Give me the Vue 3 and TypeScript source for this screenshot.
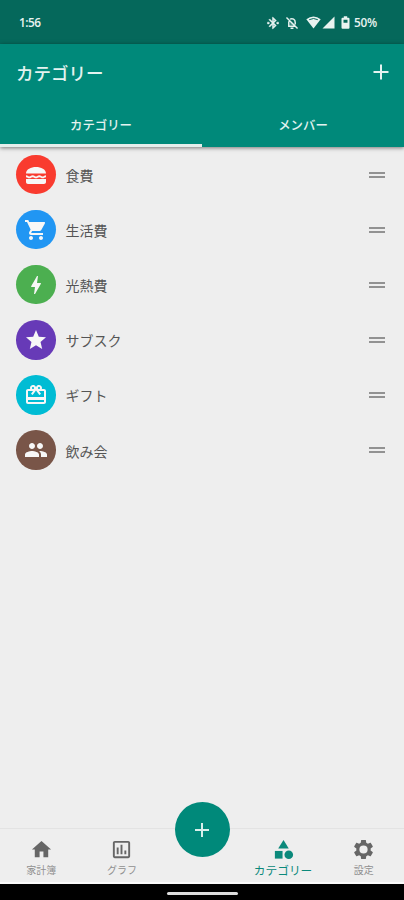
<script setup lang="ts">
interface Category {
  name: string
  color: string
  path: string
}

const categories: Category[] = [
  {
    name: '食費',
    color: '#f93b2f',
    path: 'M2 16h20v3c0 1.100-.9 2-2 2H4c-1.100 0-2-.9-2-2v-3zM12 4C7 4 2 6.200 2 10.600h20C22 6.200 17 4 12 4zM2 12.200c1.700 0 1.700 1.200 3.300 1.200s1.700-1.200 3.400-1.200 1.700 1.200 3.300 1.200 1.700-1.200 3.300-1.200 1.700 1.200 3.400 1.200 1.600-1.200 3.300-1.200v2c-1.700 0-1.700 1.100-3.300 1.100s-1.700-1.100-3.400-1.100-1.600 1.100-3.300 1.100-1.700-1.100-3.300-1.100-1.700 1.100-3.400 1.100S3.700 14.200 2 14.200z',
  },
  {
    name: '生活費',
    color: '#2196f3',
    path: 'M7 18c-1.100 0-1.990.9-1.990 2S5.900 22 7 22s2-.9 2-2-.9-2-2-2zM1 2v2h2l3.600 7.590-1.350 2.450c-.16.280-.25.610-.25.960 0 1.100.9 2 2 2h12v-2H7.420c-.14 0-.25-.11-.25-.25l.03-.12.900-1.630h7.450c.75 0 1.410-.41 1.750-1.030l3.580-6.490A1.003 1.003 0 0020 4H5.210l-.94-2H1zm16 16c-1.100 0-1.990.9-1.990 2s.89 2 1.990 2 2-.9 2-2-.9-2-2-2z',
  },
  {
    name: '光熱費',
    color: '#4caf50',
    path: 'M11 21h-1l1-7H7.500c-.58 0-.57-.32-.38-.66.190-.34.050-.08.070-.12C8.480 10.940 10.420 7.540 13 3h1l-1 7h3.500c.49 0 .56.330.470.510l-.07.150C12.960 17.550 11 21 11 21z',
  },
  {
    name: 'サブスク',
    color: '#673ab7',
    path: 'M12 17.270L18.180 21l-1.640-7.030L22 9.240l-7.190-.61L12 2 9.190 8.630 2 9.240l5.460 4.730L5.820 21z',
  },
  {
    name: 'ギフト',
    color: '#00bcd4',
    path: 'M20 6h-2.180c.11-.31.180-.65.180-1 0-1.660-1.340-3-3-3-1.050 0-1.960.54-2.500 1.350l-.5.670-.5-.68C10.960 2.540 10.050 2 9 2 7.340 2 6 3.340 6 5c0 .35.070.69.180 1H4c-1.110 0-1.990.89-1.990 2L2 19c0 1.110.89 2 2 2h16c1.110 0 2-.89 2-2V8c0-1.110-.89-2-2-2zm-5-2c.55 0 1 .45 1 1s-.45 1-1 1-1-.45-1-1 .45-1 1-1zM9 4c.55 0 1 .45 1 1s-.45 1-1 1-1-.45-1-1 .45-1 1-1zm11 15H4v-2h16v2zm0-5H4V8h5.080L7 10.830 8.620 12 12 7.400l3.380 4.600L17 10.830 14.920 8H20v6z',
  },
  {
    name: '飲み会',
    color: '#795548',
    path: 'M16 11c1.660 0 2.990-1.340 2.990-3S17.660 5 16 5s-3 1.340-3 3 1.340 3 3 3zm-8 0c1.660 0 2.990-1.340 2.990-3S9.660 5 8 5 5 6.340 5 8s1.340 3 3 3zm0 2c-2.330 0-7 1.170-7 3.500V19h14v-2.500c0-2.330-4.670-3.500-7-3.500zm8 0c-.29 0-.62.020-.97.050 1.160.84 1.970 1.970 1.970 3.450V19h6v-2.500c0-2.330-4.670-3.500-7-3.500z',
  },
]
</script>

<template>
  <div class="screen">
    <div class="status">
      <span class="clock">1:56</span>
      <div class="indicators">
        <svg class="bluetooth" viewBox="0 0 24 24"><path d="M17.710 7.710L12 2h-1v7.590L6.410 5 5 6.410 10.590 12 5 17.590 6.410 19 11 14.410V22h1l5.710-5.710-4.300-4.290 4.300-4.290zM13 5.830l1.880 1.880L13 9.590V5.830zm1.880 10.460L13 18.170v-3.760l1.880 1.880zM2.500 10.500h3v3h-3zM18.500 10.500h3v3h-3z" stroke="currentColor" stroke-width=".8" /></svg>
        <svg class="muted" viewBox="0 0 24 24"><path d="M2.500 2.500l19 19M8.500 5.500c4.500-2.500 9 .5 9 5v4M6.500 9v8.500h12M9.500 21h5" fill="none" stroke="currentColor" stroke-width="2.500" /><path d="M9 9l7 7H9z" opacity=".35" /></svg>
        <svg class="wifi" viewBox="0 0 15 13"><path d="M.3 3.200Q7.500-2.200 14.700 3.200L7.500 12.500z" /><path d="M3.200 3.700Q7.500 1.300 11.800 3.700" fill="none" stroke="#05685b" stroke-width="1" /></svg>
        <svg class="signal" viewBox="0 0 13 13"><path d="M12.500.5v12H.5z" /></svg>
        <svg class="battery" viewBox="0 0 9 13"><path d="M2.800.3h3.400v1.400h1.300q1 0 1 1v9q0 1-1 1h-6q-1 0-1-1v-9q0-1 1-1h1.300zM2.500 3.700v3.100h4V3.700z" fill-rule="evenodd" /></svg>
        <span class="level">50%</span>
      </div>
    </div>

    <header class="header">
      <div class="toolbar">
        <h1>カテゴリー</h1>
        <svg class="add" viewBox="0 0 16 16"><path d="M8 .5v15M.5 8h15" /></svg>
      </div>
      <div class="tabs">
        <div class="tab active">カテゴリー</div>
        <div class="tab">メンバー</div>
      </div>
    </header>

    <main class="list">
      <div v-for="item in categories" :key="item.name" class="row">
        <span class="avatar" :style="{ background: item.color }">
          <svg viewBox="0 0 24 24"><path :d="item.path" fill-rule="evenodd" /></svg>
        </span>
        <span class="name">{{ item.name }}</span>
        <span class="handle"></span>
      </div>
    </main>

    <nav class="nav">
      <div class="item">
        <svg viewBox="0 0 24 24"><path d="M10 20v-6h4v6h5v-8h3L12 3 2 12h3v8z" /></svg>
        <span>家計簿</span>
      </div>
      <div class="item">
        <svg viewBox="0 0 24 24"><path d="M19 3H5c-1.100 0-2 .9-2 2v14c0 1.100.9 2 2 2h14c1.100 0 2-.9 2-2V5c0-1.100-.9-2-2-2zm0 16H5V5h14v14zM7 10h2v7H7zm4-3h2v10h-2zm4 6h2v4h-2z" /></svg>
        <span>グラフ</span>
      </div>
      <div class="center">
        <div class="fab"><svg viewBox="0 0 16 16"><path d="M8 1v14M1 8h14" /></svg></div>
      </div>
      <div class="item selected">
        <svg viewBox="0 0 24 24"><path d="M12 2l-5.500 9h11z" /><circle cx="17.500" cy="17.500" r="4.500" /><path d="M3 13.500h8v8H3z" /></svg>
        <span>カテゴリー</span>
      </div>
      <div class="item">
        <svg viewBox="0 0 24 24"><path fill-rule="evenodd" d="M19.430 12.980c.04-.32.070-.64.070-.98s-.03-.66-.07-.98l2.110-1.650c.19-.15.240-.42.120-.64l-2-3.460c-.12-.22-.39-.3-.61-.22l-2.490 1c-.52-.4-1.080-.73-1.690-.98l-.38-2.650C14.460 2.180 14.250 2 14 2h-4c-.25 0-.46.180-.49.420l-.38 2.650c-.61.250-1.170.59-1.690.98l-2.490-1c-.23-.09-.49 0-.61.220l-2 3.460c-.13.220-.07.490.120.640l2.110 1.650c-.04.320-.07.650-.07.980s.03.660.070.980l-2.110 1.650c-.19.150-.24.420-.12.640l2 3.460c.12.220.39.300.61.220l2.490-1c.52.400 1.080.73 1.690.98l.38 2.650c.03.240.24.420.49.420h4c.25 0 .46-.18.490-.42l.38-2.650c.61-.25 1.170-.59 1.690-.98l2.490 1c.23.090.49 0 .61-.22l2-3.460c.12-.22.070-.49-.12-.64l-2.110-1.650zM12 16.300a4.300 4.300 0 110-8.600 4.300 4.300 0 010 8.600z" /></svg>
        <span>設定</span>
      </div>
    </nav>
    <div class="system"><span></span></div>
  </div>
</template>

<style>
body {
  margin: 0;
}
</style>

<style scoped>
.screen {
  display: flex;
  flex-direction: column;
  width: 404px;
  height: 900px;
  overflow: hidden;
  background: #eee;
  font-family: 'Noto Sans CJK JP', sans-serif;
}
svg {
  display: block;
  fill: currentColor;
}
.status {
  flex: none;
  height: 44px;
  box-sizing: border-box;
  padding: 1px 26px 0 19px;
  display: flex;
  align-items: center;
  justify-content: space-between;
  background: #05685b;
  color: #e9f3f1;
  font: 600 11.8px/43px 'Open Sans', sans-serif;
}
.clock {
  letter-spacing: -0.5px;
}
.indicators {
  display: flex;
  align-items: center;
}
.bluetooth {
  width: 14px;
  height: 14px;
  margin-right: 5px;
}
.muted {
  width: 14px;
  height: 14px;
  margin-right: 7px;
}
.wifi {
  width: 15px;
  height: 13px;
}
.signal {
  width: 13px;
  height: 13px;
  margin: 0 6px 0 1px;
}
.battery {
  width: 9px;
  height: 13px;
  margin-right: 4px;
}
.level {
  width: 24px;
  letter-spacing: -0.3px;
}
.header {
  flex: none;
  height: 103px;
  display: flex;
  flex-direction: column;
  background: #00897a;
  color: #e4f3f0;
  box-shadow: 0 1px 4px rgba(0, 0, 0, 0.5);
}
.toolbar {
  height: 58px;
  padding: 0 15px 0 16px;
  display: flex;
  align-items: center;
  justify-content: space-between;
}
h1 {
  margin: 0;
  font-size: 17.5px;
  font-weight: 500;
  line-height: 58px;
}
.add {
  width: 16px;
  height: 16px;
  margin-bottom: 2px;
}
.add path,
.fab path {
  fill: none;
  stroke: currentColor;
  stroke-width: 2;
}
.tabs {
  flex: none;
  height: 45px;
  display: flex;
}
.tab {
  flex: 1;
  height: 45px;
  box-sizing: border-box;
  padding-top: 3px;
  border-bottom: 3px solid transparent;
  text-align: center;
  font-size: 12.4px;
  font-weight: 500;
  line-height: 41px;
}
.tab.active {
  border-color: #e5eeec;
}
.list {
  flex: 1;
}
.row {
  height: 55.100px;
  padding: 0 19px 0 16px;
  display: flex;
  align-items: center;
}
.avatar {
  width: 39.500px;
  height: 39.500px;
  border-radius: 50%;
  display: flex;
  align-items: center;
  justify-content: center;
  color: #f7f7f7;
}
.avatar svg {
  width: 24px;
  height: 24px;
}
.name {
  flex: 1;
  margin: 1px 0 0 10px;
  font-size: 14px;
  color: #555;
}
.handle {
  width: 16px;
  height: 2px;
  border-top: 2px solid #929292;
  border-bottom: 2px solid #929292;
}
.nav {
  flex: none;
  height: 56px;
  box-sizing: border-box;
  border-top: 1px solid #e3e3e3;
  border-bottom: 2px solid #fafafa;
  display: grid;
  grid-template-columns: repeat(5, 1fr);
  padding-left: 1px;
  color: #666;
}
.item {
  display: flex;
  flex-direction: column;
  align-items: center;
  padding-top: 9px;
}
.item svg {
  width: 23px;
  height: 23px;
}
.item span {
  height: 18px;
  font-size: 10px;
  line-height: 18px;
  color: #909090;
}
.item.selected {
  color: #0b897b;
}
.item.selected span {
  font-size: 11.7px;
  line-height: 17px;
  color: #0b897b;
}
.center {
  display: flex;
  justify-content: center;
}
.fab {
  width: 55px;
  height: 55px;
  margin-top: -27px;
  border-radius: 50%;
  display: flex;
  align-items: center;
  justify-content: center;
  background: #00897a;
  color: #d9efeb;
}
.fab svg {
  width: 16px;
  height: 16px;
}
.system {
  flex: none;
  height: 16px;
  display: flex;
  align-items: center;
  justify-content: center;
  background: #000;
}
.system span {
  width: 71px;
  height: 3px;
  margin-top: 3px;
  border-radius: 2px;
  background: #ddd;
}
</style>
